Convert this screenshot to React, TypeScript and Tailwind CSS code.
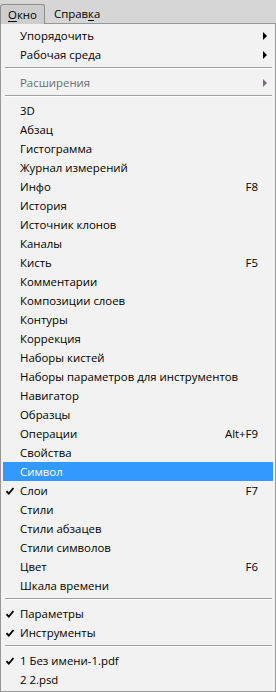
import React from 'react';

type Item =
  | { sep: true }
  | {
      sep?: false;
      label: string;
      shortcut?: string;
      sub?: boolean;
      checked?: boolean;
      disabled?: boolean;
      active?: boolean;
    };

const items: Item[] = [
  { label: 'Упорядочить', sub: true },
  { label: 'Рабочая среда', sub: true },
  { sep: true },
  { label: 'Расширения', sub: true, disabled: true },
  { sep: true },
  { label: '3D' },
  { label: 'Абзац' },
  { label: 'Гистограмма' },
  { label: 'Журнал измерений' },
  { label: 'Инфо', shortcut: 'F8' },
  { label: 'История' },
  { label: 'Источник клонов' },
  { label: 'Каналы' },
  { label: 'Кисть', shortcut: 'F5' },
  { label: 'Комментарии' },
  { label: 'Композиции слоев' },
  { label: 'Контуры' },
  { label: 'Коррекция' },
  { label: 'Наборы кистей' },
  { label: 'Наборы параметров для инструментов' },
  { label: 'Навигатор' },
  { label: 'Образцы' },
  { label: 'Операции', shortcut: 'Alt+F9' },
  { label: 'Свойства' },
  { label: 'Символ', active: true },
  { label: 'Слои', shortcut: 'F7', checked: true },
  { label: 'Стили' },
  { label: 'Стили абзацев' },
  { label: 'Стили символов' },
  { label: 'Цвет', shortcut: 'F6' },
  { label: 'Шкала времени' },
  { sep: true },
  { label: 'Параметры', checked: true },
  { label: 'Инструменты', checked: true },
  { sep: true },
  { label: '1 Без имени-1.pdf', checked: true },
  { label: '2 2.psd' },
];

const Check = ({ color }: { color: string }) => (
  <svg width="8" height="8" viewBox="0 0 8 8" className="block">
    <path d="M0.5 4.2 L2.8 6.6 L7.5 1" fill="none" stroke={color} strokeWidth="1.8" />
  </svg>
);

const Arrow = ({ color }: { color: string }) => (
  <svg width="5" height="8" viewBox="0 0 5 8" className="block">
    <path d="M0 0 L4 4 L0 8 Z" fill={color} />
  </svg>
);

export default function App() {
  return (
    <div
      className="w-[276px] h-[692px] bg-[#f2f2f2] text-[11.4px] leading-none text-black overflow-hidden"
      style={{ fontFamily: '"Open Sans", "Noto Sans", sans-serif' }}
    >
      <div className="h-[23px] bg-[#d6d6d6] flex items-end">
        <div className="relative z-10 -mb-px h-[20px] w-[45px] border border-b-0 border-[#8e8e8e] rounded-t-[3px] bg-[#cdcdcd] flex items-center pl-[7px]">
          <span>
            <span className="underline underline-offset-2">О</span>кно
          </span>
        </div>
        <div className="h-[19px] flex items-center pl-[9px]">
          <span>
            Справ<span className="underline underline-offset-2">к</span>а
          </span>
        </div>
      </div>
      <div className="h-[669px] border border-[#979797] bg-[#f2f2f2] pt-[2px] px-[2px]">
        {items.map((it, i) =>
          it.sep ? (
            <div key={i} className="h-[9px] pt-[3px] pl-[2px] pr-[1px]">
              <div className="h-[2px] border-t border-[#a0a0a0] border-b border-b-white" />
            </div>
          ) : (
            <div
              key={i}
              className={`h-[19px] flex items-center pt-px ${
                it.active ? 'bg-[#3399ff] text-white' : it.disabled ? 'text-[#6d6d6d]' : ''
              }`}
            >
              <div className="w-[17px] pl-[3px] flex items-center">
                {it.checked && <Check color={it.active ? '#fff' : '#000'} />}
              </div>
              <span className="flex-1 whitespace-nowrap">{it.label}</span>
              {it.shortcut && <span className="whitespace-nowrap">{it.shortcut}</span>}
              <div className="w-[15px] pl-[5px] flex items-center">
                {it.sub && <Arrow color={it.disabled ? '#7a6d78' : '#000'} />}
              </div>
            </div>
          )
        )}
      </div>
    </div>
  );
}
